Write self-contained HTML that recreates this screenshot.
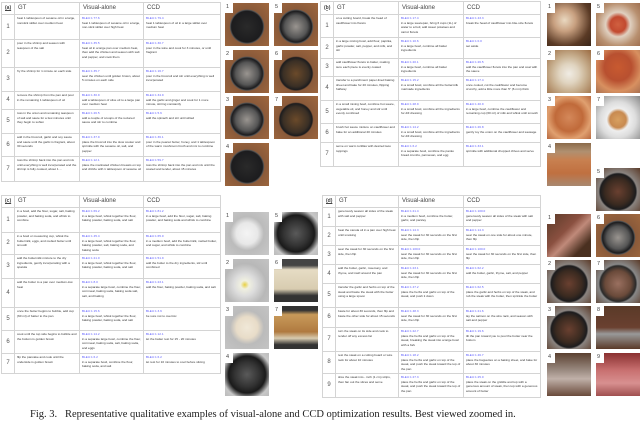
<!DOCTYPE html>
<html><head><meta charset="utf-8"><style>
*{margin:0;padding:0;box-sizing:border-box}
body{width:640px;height:414px;overflow:hidden;background:#fff;position:relative;font-family:"Liberation Sans",sans-serif}
table{position:absolute;border-collapse:collapse;table-layout:fixed;background:#fff}
td{border:1px solid #d4d4d4;vertical-align:top;font-size:3.1px;line-height:4.5px;color:#333;padding:1px 2px;overflow:hidden}
tr.h td{font-size:6px;line-height:9px;color:#444;padding:1px 3px;vertical-align:middle}
td.n{font-size:6px;color:#555;text-align:center;vertical-align:middle;padding:0}
tr.h td.n{font-size:5px;font-weight:bold;text-decoration:underline}
b{display:block;color:#5a5aff;font-weight:normal}
.im{position:absolute;width:44px;height:43px;overflow:hidden}
.im:before{content:"";position:absolute;left:0;top:0;width:8px;height:10px;background:#fff}
.im i{position:absolute;left:1px;top:1px;font-style:normal;font-size:5.5px;color:#444;z-index:2}
.pan{background:radial-gradient(circle at 50% 55%,#2a2a2a 0,#1c1c1e 48%,#555 52%,#8a5a3a 54%,#a0683e 100%)}
.pan2{background:radial-gradient(circle at 50% 55%,#9a9590 0,#555 35%,#1c1c1e 48%,#555 52%,#8a5a3a 54%,#a0683e 100%)}
.pan3{background:radial-gradient(circle at 50% 55%,#6b4a2a 0,#3a2f25 40%,#1c1c1e 50%,#8a5a3a 54%,#a0683e 100%)}
.cau{background:radial-gradient(circle at 40% 40%,#e9d8c0 0,#c8a080 30%,#5a3a25 70%,#3a2518 100%)}
.bowl{background:radial-gradient(circle at 50% 50%,#d06040 0,#c24a30 25%,#e0d0c0 40%,#b89070 70%,#a07050 100%)}
.fry{background:radial-gradient(circle at 50% 50%,#d4885a 0,#c06a3a 45%,#e0a070 70%,#b86a40 100%)}
.plate{background:radial-gradient(circle at 50% 55%,#d8a060 0,#c88a50 25%,#eee 35%,#ddd 55%,#888 100%)}
.tray{background:linear-gradient(#8a6a4a,#b09070 20%,#c88050 40%,#c07040 70%,#a88870 100%)}
.glass{background:radial-gradient(circle at 50% 50%,#f4f4f4 0,#e8e8e8 35%,#bbb 55%,#c8c8c8 100%)}
.blk{background:radial-gradient(circle at 50% 50%,#5a5a5a 0,#333 40%,#1a1a1a 60%,#c8c8c8 80%,#bbb 100%)}
.cake{background:linear-gradient(#444 0,#444 15%,#e6dcc4 25%,#d8ccb0 70%,#333 85%)}
.cake2{background:linear-gradient(#333 0,#333 10%,#c89a5a 20%,#b07a40 60%,#d8cbb0 75%,#333 90%)}
.stk{background:linear-gradient(135deg,#5a3a28,#8a5040 40%,#c08a7a 55%,#4a3020 80%)}
.stk2{background:radial-gradient(circle at 50% 55%,#6a4030 0,#3a2a20 40%,#1c1c1e 55%,#8a8480 60%,#5a3a28 100%)}
.stk3{background:linear-gradient(#5a4030,#9a8a80 40%,#c0b0a8 60%,#6a4a3a)}
.stk4{background:linear-gradient(#8a3030,#c87070 40%,#d89090 70%,#a05050)}
.cap{position:absolute;left:30px;top:409px;font-family:"Liberation Serif",serif;font-size:10.5px;line-height:12px;color:#222;white-space:nowrap}
</style></head><body>

<!-- (a) -->
<table style="left:1px;top:2px;width:219px">
<colgroup><col style="width:13px"><col style="width:65px"><col style="width:64px"><col style="width:77px"></colgroup>
<tr class="h" style="height:11px"><td class="n">(a)</td><td>GT</td><td>Visual-alone</td><td>CCD</td></tr>
<tr style="height:25px"><td class="n">1</td><td>heat 1 tablespoon of sesame oil in a large, nonstick skillet over medium heat</td><td><b>BLEU:1 77.6</b>heat 1 tablespoon of sesame oil in a large, non-stick skillet over high heat</td><td><b>BLEU:1 79.4</b>heat 1 tablespoon of oil in a large skillet over medium heat</td></tr>
<tr style="height:28px"><td class="n">2</td><td>pour in the shrimp and season with teaspoon of the salt</td><td><b>BLEU:1 35.5</b>heat oil in a large pan over medium heat, then add the chicken and season with salt and pepper, and cook them</td><td><b>BLEU:1 30.7</b>pour in the wine and cook for 3 minutes, or until fragrant</td></tr>
<tr style="height:24px"><td class="n">3</td><td>fry the shrimp for 1 minute on each side</td><td><b>BLEU:1 35.7</b>sear the chicken until golden brown, about 5 minutes on each side</td><td><b>BLEU:1 16.7</b>pour in the broccoli and stir until everything is well incorporated</td></tr>
<tr style="height:18px"><td class="n">4</td><td>remove the shrimp from the pan and pour in the remaining 1 tablespoon of oil</td><td><b>BLEU:1 30.9</b>add a tablespoon of olive oil to a large pan over medium heat</td><td><b>BLEU:1 34.9</b>add the garlic and ginger and cook for 1 more minute, stirring constantly</td></tr>
<tr style="height:24px"><td class="n">5</td><td>toss in the onion and remaining teaspoon of salt and saute for a few minutes until they begin to soften</td><td><b>BLEU:1 26.5</b>add a couple of scoops of the reduced sauce and stir to combine</td><td><b>BLEU:1 5.6</b>add the spinach and stir until wilted</td></tr>
<tr style="height:23px"><td class="n">6</td><td>add in the broccoli, garlic and soy sauce and saute until the garlic is fragrant, about 30 seconds</td><td><b>BLEU:1 37.9</b>place the broccoli into the slow cooker and sprinkle with the sesame oil, salt, and pepper</td><td><b>BLEU:1 36.1</b>pour in the peanut butter, honey, and 1 tablespoon of the warm mushroom broth and mix to combine</td></tr>
<tr style="height:25px"><td class="n">7</td><td>toss the shrimp back into the pan and mix until everything is well incorporated and the shrimp is fully cooked, about 1 ...</td><td><b>BLEU:1 12.1</b>place the marinated chicken breasts on top and drizzle with 1 tablespoon of sesame oil</td><td><b>BLEU:1 59.7</b>toss the shrimp back into the pan and mix until the coated and tender, about 15 minutes</td></tr>
</table>
<div class="im pan" style="left:225px;top:3px"><i>1</i></div>
<div class="im pan2" style="left:225px;top:50px"><i>2</i></div>
<div class="im pan2" style="left:225px;top:96px"><i>3</i></div>
<div class="im pan" style="left:225px;top:143px"><i>4</i></div>
<div class="im pan2" style="left:274px;top:3px"><i>5</i></div>
<div class="im pan3" style="left:274px;top:50px"><i>6</i></div>
<div class="im pan3" style="left:274px;top:96px"><i>7</i></div>

<!-- (b) -->
<table style="left:320px;top:1px;width:220px">
<colgroup><col style="width:13px"><col style="width:65px"><col style="width:65px"><col style="width:77px"></colgroup>
<tr class="h" style="height:13px"><td class="n">(b)</td><td>GT</td><td>Visual-alone</td><td>CCD</td></tr>
<tr style="height:23px"><td class="n">1</td><td>on a cutting board, break the head of cauliflower into florets</td><td><b>BLEU:1 17.4</b>in a large saucepan, bring 6 cups (1L) of water to a boil, add sweet potatoes and carrot florets</td><td><b>BLEU:1 43.3</b>break the head of cauliflower into bite-size florets</td></tr>
<tr style="height:21px"><td class="n">2</td><td>in a large mixing bowl, add flour, paprika, garlic powder, salt, pepper, and milk, and stir</td><td><b>BLEU:1 10.6</b>in a large bowl, combine all batter ingredients</td><td><b>BLEU:1 0.0</b>set aside</td></tr>
<tr style="height:18px"><td class="n">3</td><td>add cauliflower florets to batter, making sure each piece is evenly coated</td><td><b>BLEU:1 20.1</b>in a large bowl, combine all batter ingredients</td><td><b>BLEU:1 26.5</b>add the cauliflower florets into the pan and coat with the sauce</td></tr>
<tr style="height:24px"><td class="n">4</td><td>transfer to a parchment paper-lined baking sheet and bake for 20 minutes, flipping halfway</td><td><b>BLEU:1 15.2</b>in a small bowl, combine all the buttermilk marinade ingredients</td><td><b>BLEU:1 17.4</b>once cooled, cut the cauliflower and become crunchy, add a little more than 5" (6 mm) thick</td></tr>
<tr style="height:23px"><td class="n">5</td><td>in a small mixing bowl, combine hot sauce, vegetable oil, and honey and stir until evenly combined</td><td><b>BLEU:1 28.9</b>in a small bowl, combine all the ingredients for dill dressing</td><td><b>BLEU:1 40.9</b>in a large bowl, combine the cauliflower and remaining cup (60 ml) of milk and whisk until smooth</td></tr>
<tr style="height:19px"><td class="n">6</td><td>brush hot sauce mixture on cauliflower and bake for an additional 20 minutes</td><td><b>BLEU:1 14.2</b>in a small bowl, combine all the ingredients for dill dressing</td><td><b>BLEU:1 26.8</b>gently toy the onion on the cauliflower and sausage</td></tr>
<tr style="height:24px"><td class="n">7</td><td>serve on warm tortillas with desired taco toppings</td><td><b>BLEU:1 6.2</b>in a separate bowl, combine the panko bread crumbs, parmesan, and egg</td><td><b>BLEU:1 33.1</b>sprinkle with additional chopped chives and serve</td></tr>
</table>
<div class="im cau" style="left:547px;top:3px"><i>1</i></div>
<div class="im glass" style="left:547px;top:50px;background:radial-gradient(circle at 50% 55%,#f0ece4 0,#e0d4c0 30%,#c8b090 55%,#9a6a40 100%)"><i>2</i></div>
<div class="im fry" style="left:547px;top:96px"><i>3</i></div>
<div class="im tray" style="left:547px;top:143px"><i>4</i></div>
<div class="im bowl" style="left:596px;top:3px"><i>5</i></div>
<div class="im fry" style="left:596px;top:50px;background:radial-gradient(circle at 50% 40%,#c85a30 0,#b85030 40%,#d89060 70%,#a87050 100%)"><i>6</i></div>
<div class="im plate" style="left:596px;top:96px"><i>7</i></div>

<!-- (c) -->
<table style="left:1px;top:195px;width:219px">
<colgroup><col style="width:13px"><col style="width:65px"><col style="width:64px"><col style="width:77px"></colgroup>
<tr class="h" style="height:12px"><td class="n">(c)</td><td>GT</td><td>Visual-alone</td><td>CCD</td></tr>
<tr style="height:25px"><td class="n">1</td><td>in a bowl, add the flour, sugar, salt, baking powder, and baking soda, and whisk to combine</td><td><b>BLEU:1 69.2</b>in a large bowl, whisk together the flour, baking powder, baking soda, and salt</td><td><b>BLEU:1 81.2</b>in a large bowl, add the flour, sugar, salt, baking powder, and baking soda and whisk to combine</td></tr>
<tr style="height:22px"><td class="n">2</td><td>in a bowl or measuring cup, whisk the buttermilk, eggs, and melted butter until smooth</td><td><b>BLEU:1 45.4</b>in a large bowl, whisk together the flour, baking powder, salt, baking soda, and baking soda</td><td><b>BLEU:1 65.0</b>in a medium bowl, add the buttermilk, melted butter, and sugar, and whisk to combine</td></tr>
<tr style="height:24px"><td class="n">3</td><td>add the buttermilk mixture to the dry ingredients, gently incorporating with a spatula</td><td><b>BLEU:1 21.0</b>in a large bowl, whisk together the flour, baking powder, baking soda, and salt</td><td><b>BLEU:1 51.9</b>add the butter to the dry ingredients, stir until combined</td></tr>
<tr style="height:29px"><td class="n">4</td><td>add the butter to a pan over medium-low heat</td><td><b>BLEU:1 8.0</b>in a separate large bowl, combine the flour, cornmeal, baking soda, baking soda salt, salt, and baking</td><td><b>BLEU:1 23.1</b>add the flour, baking powder, baking soda, and salt</td></tr>
<tr style="height:23px"><td class="n">5</td><td>once the butter begins to bubble, add cup (60 ml) of batter to the pan</td><td><b>BLEU:1 15.6</b>in a large bowl, whisk together the flour, baking powder, baking soda, and salt</td><td><b>BLEU:1 3.6</b>be sure not to overmix</td></tr>
<tr style="height:23px"><td class="n">6</td><td>cook until the top side begins to bubble and the bottom is golden brown</td><td><b>BLEU:1 14.2</b>in a separate large bowl, combine the flour, cornmeal, baking soda, salt, baking soda, and eggs</td><td><b>BLEU:1 12.1</b>let the batter rest for 15 - 20 minutes</td></tr>
<tr style="height:20px"><td class="n">7</td><td>flip the pancake and cook until the underside is golden brown</td><td><b>BLEU:1 6.2</b>in a separate bowl, combine the flour, baking soda, and salt</td><td><b>BLEU:1 6.2</b>let rest for 10 minutes to cool before slicing</td></tr>
</table>
<div class="im glass" style="left:225px;top:212px"><i>1</i></div>
<div class="im glass" style="left:225px;top:259px;background:radial-gradient(circle at 45% 60%,#e8d040 0,#f0f0e0 12%,#ddd 30%,#b8b8b8 60%,#c4c4c4 100%)"><i>2</i></div>
<div class="im glass" style="left:225px;top:306px;background:radial-gradient(circle at 50% 50%,#f0e8d8 0,#e8dcc8 35%,#bbb 55%,#c4c4c4 100%)"><i>3</i></div>
<div class="im blk" style="left:225px;top:353px"><i>4</i></div>
<div class="im blk" style="left:274px;top:212px"><i>5</i></div>
<div class="im cake" style="left:274px;top:259px"><i>6</i></div>
<div class="im cake2" style="left:274px;top:306px"><i>7</i></div>

<!-- (d) -->
<table style="left:322px;top:195px;width:218px">
<colgroup><col style="width:13px"><col style="width:63px"><col style="width:65px"><col style="width:77px"></colgroup>
<tr class="h" style="height:12px"><td class="n">(d)</td><td>GT</td><td>Visual-alone</td><td>CCD</td></tr>
<tr style="height:19px"><td class="n">1</td><td>generously season all sides of the steak with salt and pepper</td><td><b>BLEU:1 21.4</b>in a medium bowl, combine the butter, garlic, and parsley</td><td><b>BLEU:1 100.0</b>generously season all sides of the steak with salt and pepper</td></tr>
<tr style="height:19px"><td class="n">2</td><td>heat the canola oil in a pan over high heat until smoking</td><td><b>BLEU:1 14.3</b>sear the steak for 30 seconds on the first side, then flip</td><td><b>BLEU:1 14.3</b>sear the steak on one side for about one minute, then flip</td></tr>
<tr style="height:19px"><td class="n">3</td><td>sear the steak for 30 seconds on the first side, then flip</td><td><b>BLEU:1 100.0</b>sear the steak for 30 seconds on the first side, then flip</td><td><b>BLEU:1 100.0</b>sear the steak for 30 seconds on the first side, then flip</td></tr>
<tr style="height:19px"><td class="n">4</td><td>add the butter, garlic, rosemary, and thyme, and swirl around the pan</td><td><b>BLEU:1 23.1</b>sear the steak for 30 seconds on the first side, then flip</td><td><b>BLEU:1 62.2</b>add the butter, garlic, thyme, salt, and pepper</td></tr>
<tr style="height:24px"><td class="n">5</td><td>transfer the garlic and herbs on top of the steak and baste the steak with the butter using a large spoon</td><td><b>BLEU:1 47.2</b>place the herbs and garlic on top of the steak, and push it down</td><td><b>BLEU:1 62.5</b>place the garlic and herbs on top of the steak, and rub the steak with the butter, then sprinkle the butter</td></tr>
<tr style="height:20px"><td class="n">6</td><td>baste for about 30 seconds, then flip and baste the other side for about 15 seconds</td><td><b>BLEU:1 48.3</b>sear the steak for 30 seconds on the first side, then flip</td><td><b>BLEU:1 21.6</b>lay the salmon on the wire rack, and season with salt and pepper</td></tr>
<tr style="height:24px"><td class="n">7</td><td>turn the steak on its side and cook to render off any excess fat</td><td><b>BLEU:1 22.7</b>place the herbs and garlic on top of the steak, breaking the steak into a large bowl with a fork</td><td><b>BLEU:1 19.6</b>tilt the pan toward you to pool the butter near the bottom</td></tr>
<tr style="height:22px"><td class="n">8</td><td>rest the steak on a cutting board or wire rack for about 10 minutes</td><td><b>BLEU:1 18.2</b>place the herbs and garlic on top of the steak, and push the steak toward the top of the pan</td><td><b>BLEU:1 46.7</b>place the baguettes on a baking sheet, and bake for about 30 minutes</td></tr>
<tr style="height:24px"><td class="n">9</td><td>slice the steak into - inch (1 cm) strips, then fan out the slices and serve</td><td><b>BLEU:1 27.3</b>place the herbs and garlic on top of the steak, and push the steak toward the top of the pan</td><td><b>BLEU:1 25.0</b>place the steak on the griddle and top with a generous amount of steak, then top with a generous amount of butter</td></tr>
</table>
<div class="im stk" style="left:547px;top:214px"><i>1</i></div>
<div class="im stk2" style="left:547px;top:260px"><i>2</i></div>
<div class="im stk2" style="left:547px;top:306px"><i>3</i></div>
<div class="im stk3" style="left:547px;top:353px"><i>4</i></div>
<div class="im stk2" style="left:596px;top:168px"><i>5</i></div>
<div class="im pan2" style="left:596px;top:214px"><i>6</i></div>
<div class="im stk2" style="left:596px;top:260px;background:radial-gradient(circle at 50% 55%,#9a7060 0,#6a4a3a 40%,#2a2a2a 55%,#888 60%,#5a3a28 100%)"><i>7</i></div>
<div class="im stk" style="left:596px;top:306px;background:linear-gradient(#5a3a28,#6a4030 50%,#999 65%,#5a3a28)"><i>8</i></div>
<div class="im stk4" style="left:596px;top:353px"><i>9</i></div>

<div class="cap">Fig. 3.&nbsp;&nbsp; Representative qualitative examples of visual-alone and CCD optimization results. Best viewed zoomed in.</div>
</body></html>
